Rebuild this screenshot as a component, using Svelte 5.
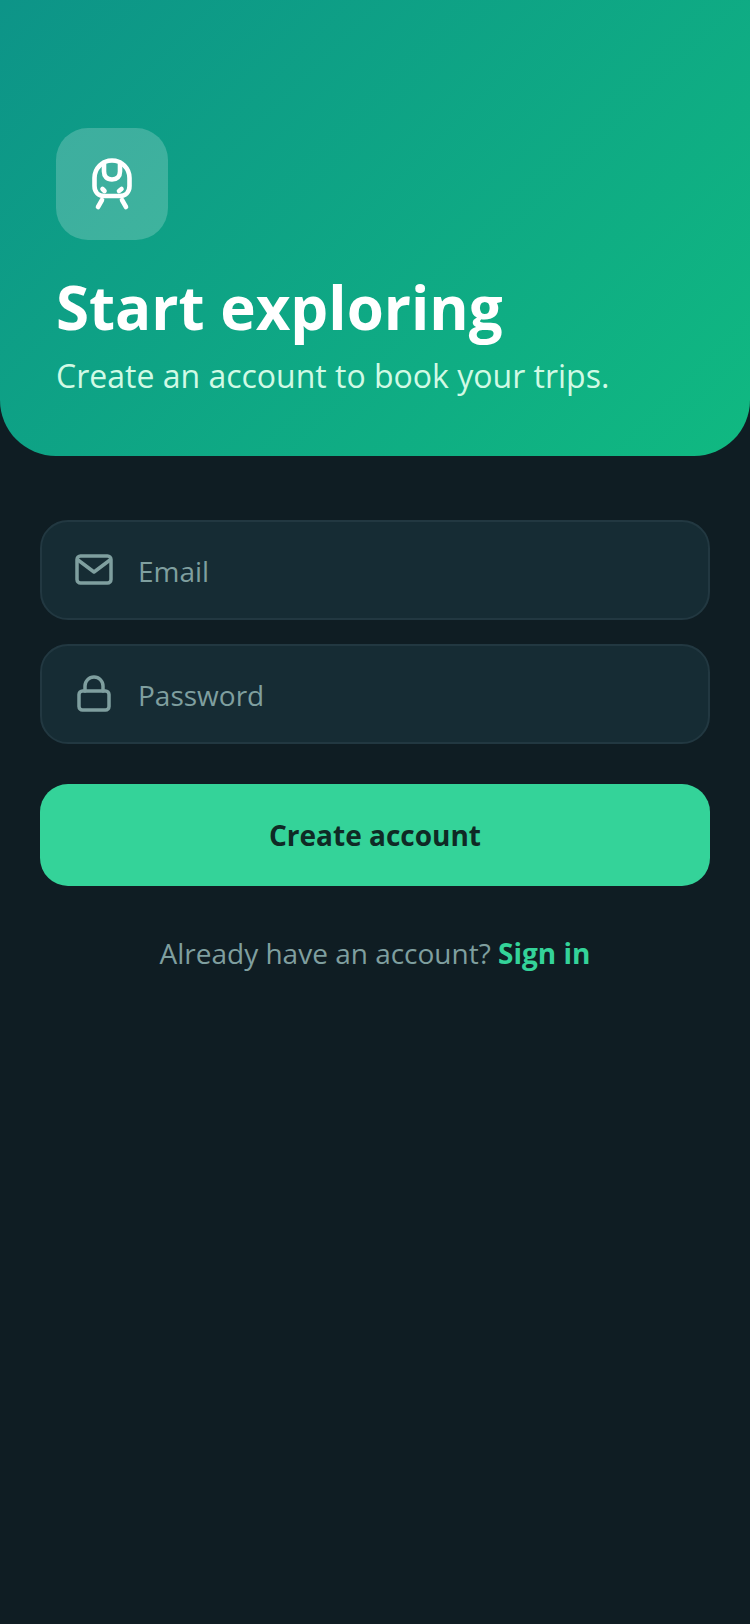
<script lang="ts">
	let email = $state("");
	let password = $state("");
</script>

<main class="page">
	<header class="hero">
		<div class="tile">
			<svg class="train" viewBox="0 0 56 64" fill="none" stroke="#fff" stroke-width="4.600" stroke-linecap="round" stroke-linejoin="round">
				<path d="M28 8.500a17.500 17.500 0 0 1 17.500 17.500v8c0 6-4 10-10 10h-15c-6 0-10-4-10-10v-8A17.500 17.500 0 0 1 28 8.500z" />
				<path d="M20 10.500v9c0 5 3 8 8 8s8-3 8-8v-9" />
				<path d="M18.500 37l2 2M37.500 37l-2.500 2" />
				<path d="M18 48l-4 7M38 48l4 7" />
			</svg>
		</div>
		<h1>Start exploring</h1>
		<p>Create an account to book your trips.</p>
	</header>

	<form class="form">
		<label class="field">
			<svg class="icon" viewBox="0 0 40 40" fill="none" stroke="#7f9f9f" stroke-width="3.500" stroke-linecap="round" stroke-linejoin="round">
				<rect x="3" y="6" width="34" height="27" rx="3.500" />
				<path d="M4 10l16 12L36 10" />
			</svg>
			<input type="email" placeholder="Email" bind:value={email} />
		</label>
		<label class="field">
			<svg class="icon" viewBox="0 0 40 40" fill="none" stroke="#7f9f9f" stroke-width="3.500" stroke-linecap="round" stroke-linejoin="round">
				<rect x="5" y="17" width="30" height="19" rx="3.500" />
				<path d="M11 17v-5a9 9 0 0 1 18 0v5" />
			</svg>
			<input type="password" placeholder="Password" bind:value={password} />
		</label>
		<button type="button" class="submit">Create account</button>
	</form>

	<p class="footer">Already have an account? <a href="#signin">Sign in</a></p>
</main>

<style>
	:global(body) {
		background: #0f1d23;
	}

	.page {
		min-height: 1624px;
		background: #0f1d23;
		font-family: "Open Sans", sans-serif;
	}

	.hero {
		box-sizing: border-box;
		height: 456px;
		padding: 128px 56px 0;
		border-radius: 0 0 56px 56px;
		background: linear-gradient(135deg, #0d9488, #10b981);
		color: #fff;
	}

	.tile {
		display: flex;
		align-items: center;
		justify-content: center;
		width: 112px;
		height: 112px;
		border-radius: 32px;
		background: rgba(255, 255, 255, 0.2);
	}

	.train {
		width: 56px;
		height: 64px;
		display: block;
	}

	h1 {
		margin: 31px 0 0;
		font-size: 60px;
		line-height: 72px;
		font-weight: 700;
	}

	.hero p {
		margin: 11px 0 0;
		font-size: 32px;
		line-height: 44px;
		color: #d1fae5;
	}

	.form {
		display: flex;
		flex-direction: column;
		gap: 24px;
		padding: 64px 40px 0;
	}

	.field {
		box-sizing: border-box;
		display: flex;
		align-items: center;
		gap: 24px;
		height: 100px;
		padding: 0 32px;
		border: 2px solid #223841;
		border-radius: 28px;
		background: #162c34;
	}

	.icon {
		flex: none;
		width: 40px;
		height: 40px;
	}

	input {
		flex: 1;
		min-width: 0;
		padding: 2px 0 0;
		border: 0;
		outline: 0;
		background: transparent;
		font: inherit;
		font-size: 28px;
		color: #fff;
	}

	input::placeholder {
		color: #7f9f9f;
		opacity: 1;
	}

	.submit {
		height: 102px;
		margin-top: 16px;
		border: 0;
		border-radius: 28px;
		background: #34d399;
		color: #0f2a25;
		font: inherit;
		font-size: 28px;
		font-weight: 700;
	}

	.footer {
		margin: 47px 0 0;
		text-align: center;
		font-size: 28px;
		line-height: 40px;
		color: #7f9f9f;
	}

	.footer a {
		color: #34d399;
		font-weight: 700;
		text-decoration: none;
	}
</style>
